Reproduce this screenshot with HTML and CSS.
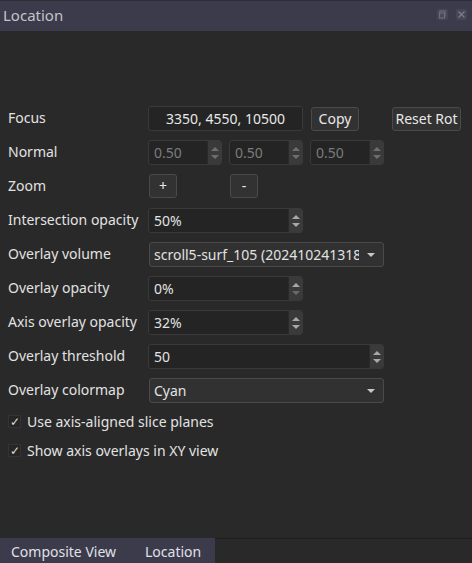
FILE: index.html
```html
<!DOCTYPE html>
<html>
<head>
<meta charset="utf-8">
<link rel="stylesheet" href="styles.css">
</head>
<body>
<div class="app">
  <div class="titlebar">
    <span class="title">Location</span>
    <div class="tb-buttons">
      <span class="tb-btn"><svg width="11" height="11" viewBox="0 0 11 11"><rect x="3" y="2" width="5" height="5" fill="none" stroke="#6e6e7c" stroke-width="1"/><rect x="2.5" y="4" width="5" height="5" fill="#4a4a58" stroke="#6e6e7c" stroke-width="1"/></svg></span>
      <span class="tb-btn"><svg width="11" height="11" viewBox="0 0 11 11"><path d="M2.5 2.5 L8.5 8.5 M8.5 2.5 L2.5 8.5" stroke="#7a7a88" stroke-width="1.4"/></svg></span>
    </div>
  </div>

  <div class="form">
    <div class="row">
      <span class="label">Focus</span>
      <div class="field focus">3350, 4550, 10500</div>
      <button class="btn copy">Copy</button>
      <button class="btn reset">Reset Rot</button>
    </div>
    <div class="row">
      <span class="label">Normal</span>
      <div class="spin small disabled"><span class="val">0.50</span><span class="arrows"><i class="up"></i><i class="down"></i></span></div>
      <div class="spin small disabled"><span class="val">0.50</span><span class="arrows"><i class="up"></i><i class="down"></i></span></div>
      <div class="spin small disabled"><span class="val">0.50</span><span class="arrows"><i class="up"></i><i class="down"></i></span></div>
    </div>
    <div class="row">
      <span class="label">Zoom</span>
      <button class="btn zbtn">+</button>
      <button class="btn zbtn zminus">-</button>
    </div>
    <div class="row">
      <span class="label">Intersection opacity</span>
      <div class="spin mid"><span class="val">50%</span><span class="arrows"><i class="up"></i><i class="down"></i></span></div>
    </div>
    <div class="row">
      <span class="label">Overlay volume</span>
      <div class="combo wide"><span class="cval">scroll5-surf_105 (20241024131826)</span><i class="caret"></i></div>
    </div>
    <div class="row">
      <span class="label">Overlay opacity</span>
      <div class="spin mid"><span class="val">0%</span><span class="arrows"><i class="up"></i><i class="down dim"></i></span></div>
    </div>
    <div class="row">
      <span class="label">Axis overlay opacity</span>
      <div class="spin mid"><span class="val">32%</span><span class="arrows"><i class="up"></i><i class="down"></i></span></div>
    </div>
    <div class="row">
      <span class="label">Overlay threshold</span>
      <div class="spin wide"><span class="val">50</span><span class="arrows"><i class="up"></i><i class="down"></i></span></div>
    </div>
    <div class="row">
      <span class="label">Overlay colormap</span>
      <div class="combo wide"><span class="cval">Cyan</span><i class="caret"></i></div>
    </div>
    <div class="check">
      <span class="box">✓</span><span>Use axis-aligned slice planes</span>
    </div>
    <div class="check">
      <span class="box">✓</span><span>Show axis overlays in XY view</span>
    </div>
  </div>

  <div class="tabbar">
    <div class="tabs">
      <span class="tab">Composite View</span>
      <span class="tab">Location</span>
    </div>
  </div>
</div>
</body>
</html>
```

FILE: styles.css
```css
html, body {
  margin: 0;
  padding: 0;
  background: #292929;
}
body {
  font-family: "Noto Sans", "Open Sans", sans-serif;
  font-size: 14px;
  color: #e2e2e2;
}
.app {
  width: 472px;
  height: 563px;
  display: flex;
  flex-direction: column;
  overflow: hidden;
}
.titlebar {
  height: 30px;
  border-top: 1px solid #2c2c34;
  background: #3c3b4b;
  display: flex;
  align-items: center;
  justify-content: space-between;
  padding: 0 5px 0 3px;
  flex-shrink: 0;
}
.title {
  font-size: 15px;
  color: #c4c4cc;
  margin-top: -2px;
}
.tb-buttons {
  display: flex;
  gap: 8px;
  margin-top: -4px;
}
.tb-btn {
  width: 11px;
  height: 11px;
  background: #474656;
  border-radius: 2px;
  display: block;
}
.tb-btn svg { display: block; }

.form {
  flex: 1;
  padding: 75px 0 0 8px;
  display: flex;
  flex-direction: column;
  gap: 9px;
}
.row {
  display: flex;
  align-items: center;
  height: 25px;
}
.label {
  width: 140px;
  flex-shrink: 0;
  white-space: nowrap;
  margin-top: -2px;
}
.field, .spin, .combo {
  box-sizing: border-box;
  height: 25px;
  border: 1px solid #3a3a3a;
  border-radius: 3px;
  background: #242424;
  display: flex;
  align-items: center;
}
.field.focus {
  width: 155px;
  justify-content: center;
  color: #e8e8e8;
}
.btn {
  box-sizing: border-box;
  font-family: inherit;
  font-size: 14px;
  color: #e8e8e8;
  background: #323232;
  border: 1px solid #4a4a4a;
  border-radius: 3px;
  height: 24px;
  padding: 0;
  line-height: 20px;
}
.copy { width: 48px; margin-left: 8px; }
.reset { width: 69px; margin-left: 33px; }
.zbtn { width: 28px; height: 24px; margin-left: 1px; margin-top: -2px; }
.zminus { margin-left: 53px; }

.spin { padding-left: 5px; justify-content: space-between; }
.spin .val { flex: 1; }
.spin.small { width: 74px; margin-right: 7px; }
.spin.mid { width: 155px; }
.spin.wide { width: 236px; }
.spin.disabled .val { color: #7c7c7c; }
.arrows {
  width: 13px;
  align-self: stretch;
  background: #3a3a3a;
  border-left: 1px solid #2a2a2a;
  border-radius: 0 2px 2px 0;
  display: flex;
  flex-direction: column;
  align-items: center;
  justify-content: center;
  gap: 4px;
}
.arrows i {
  display: block;
  width: 0;
  height: 0;
  border-left: 4px solid transparent;
  border-right: 4px solid transparent;
}
.arrows .up { border-bottom: 4px solid #a8a8a8; }
.arrows .down { border-top: 4px solid #a8a8a8; }
.arrows .down.dim { border-top-color: #6a6a6a; }
.spin.disabled .arrows .up { border-bottom-color: #6e6e6e; }
.spin.disabled .arrows .down { border-top-color: #6e6e6e; }

.combo {
  width: 235px;
  margin-left: 1px;
  background: #313131;
  border-color: #4a4a4a;
  padding: 0 8px 0 4px;
  justify-content: space-between;
  overflow: hidden;
}
.cval {
  white-space: nowrap;
  overflow: hidden;
  flex: 1;
  min-width: 0;
  margin-right: 8px;
}
.caret {
  flex-shrink: 0;
  width: 0;
  height: 0;
  border-left: 4px solid transparent;
  border-right: 4px solid transparent;
  border-top: 4px solid #c8c8c8;
}

.check {
  display: flex;
  align-items: center;
  height: 21px;
  gap: 6px;
  margin-top: -1px;
}
.box {
  box-sizing: border-box;
  width: 13px;
  height: 13px;
  border: 1px solid #333;
  background: #262626;
  font-size: 12px;
  line-height: 11px;
  text-align: center;
  color: #d8d8d8;
}

.tabbar {
  height: 24px;
  border-top: 1px solid #1e1e1e;
  flex-shrink: 0;
  display: flex;
}
.tabs {
  width: 215px;
  background: #3c3b4b;
  display: flex;
  align-items: center;
  margin-top: -1px;
  height: 25px;
}
.tab {
  color: #e0e0e8;
  padding-left: 11px;
  width: 123px;
  padding-top: 2px;
  white-space: nowrap;
}
.tab + .tab { width: auto; padding-left: 11px; }
```
